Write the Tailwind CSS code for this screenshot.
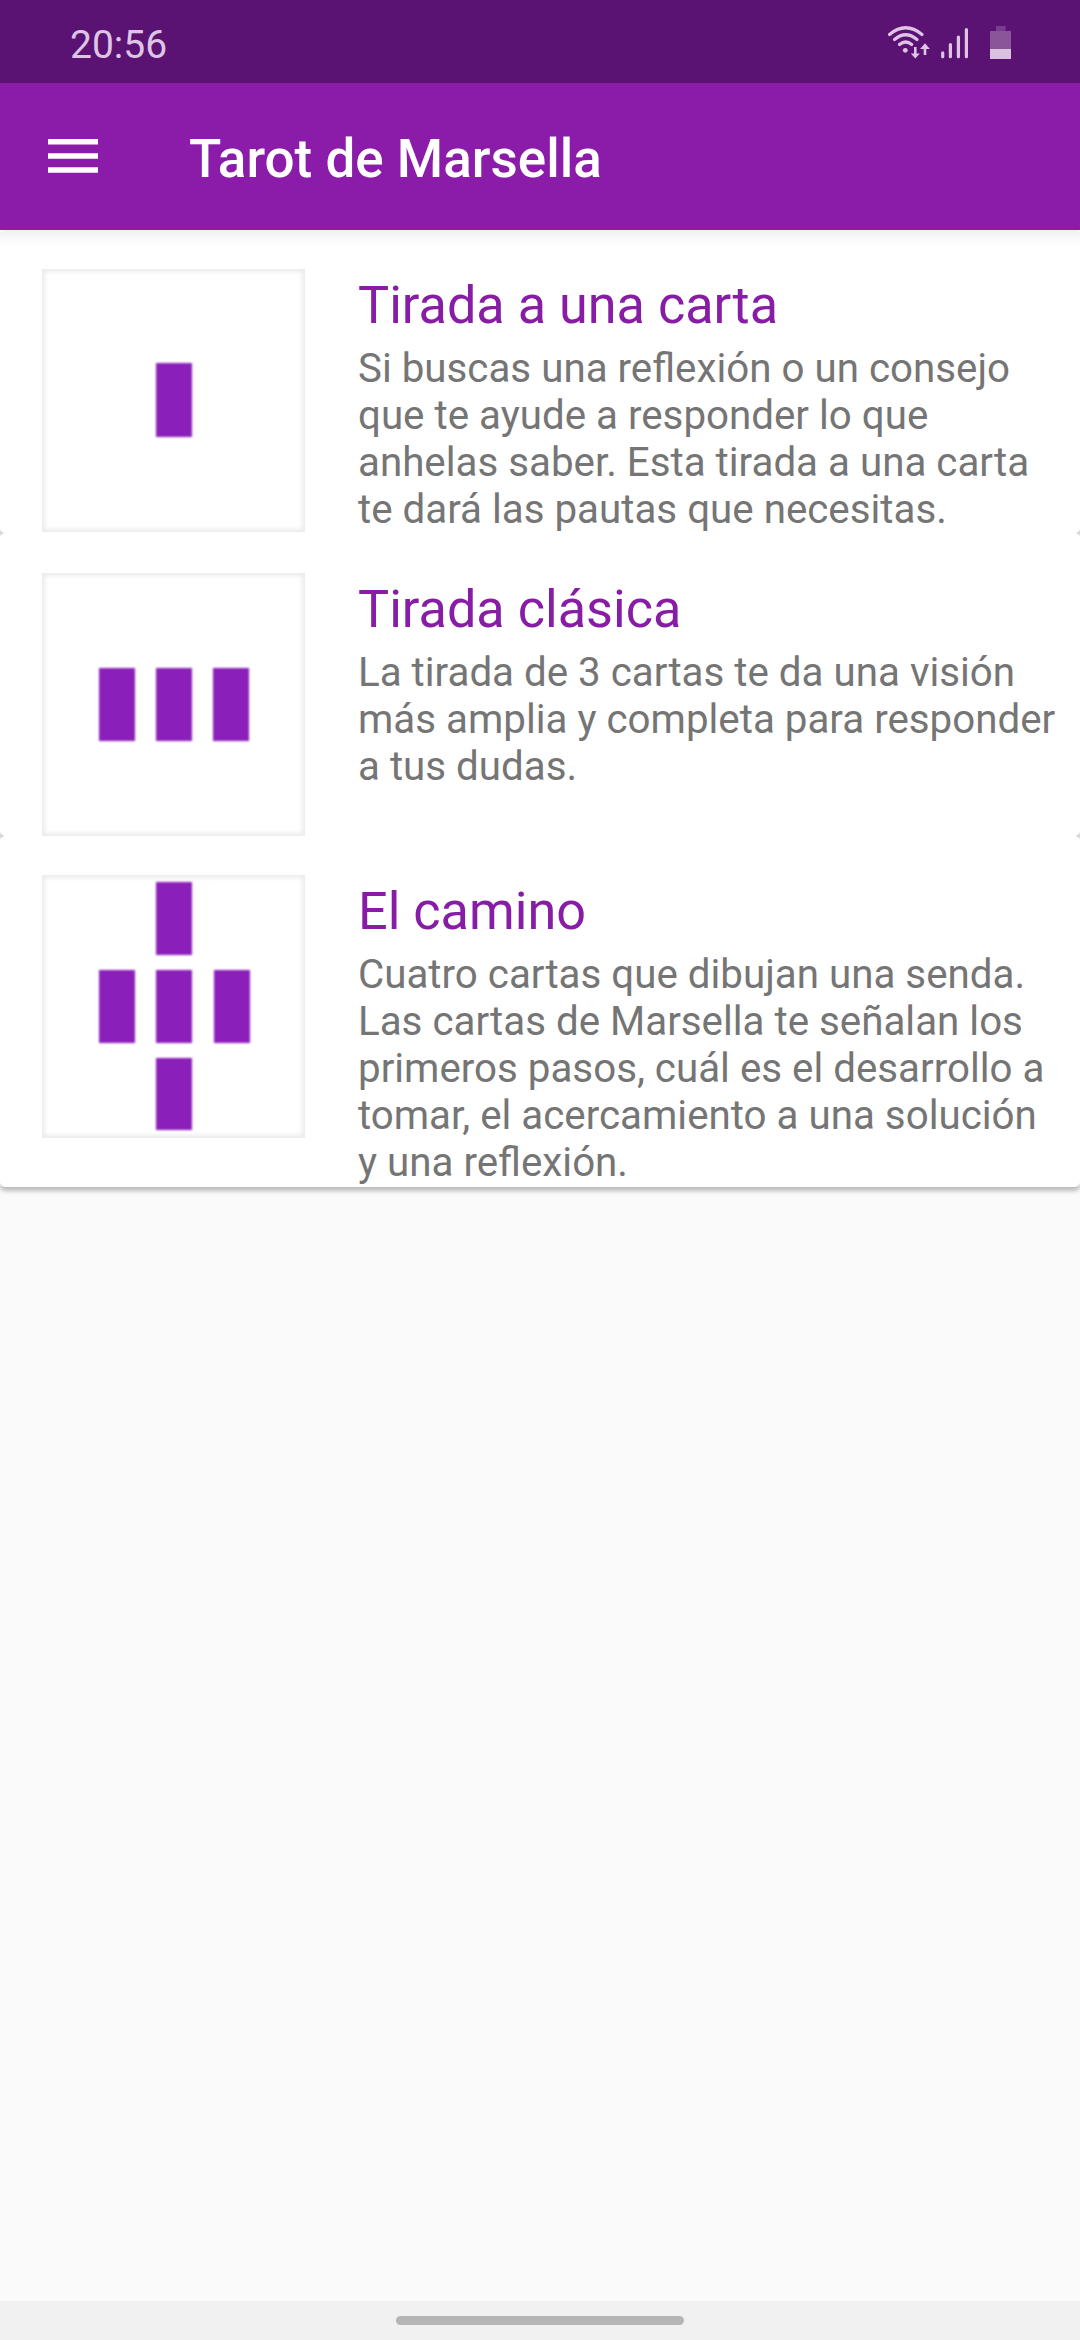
<!DOCTYPE html>
<html lang="es">
<head>
<meta charset="utf-8">
<title>Tarot de Marsella</title>
<script src="https://cdn.jsdelivr.net/npm/@tailwindcss/browser@4"></script>
</head>
<body class="w-[1080px] h-[2340px] overflow-hidden flex flex-col bg-[#fafafa] font-[Roboto,sans-serif]">
  <div class="h-[83px] shrink-0 bg-[#5b1373] flex items-center pl-[70px] pr-[69px] pt-[7px] text-[#dec5e6]">
    <span class="text-[39px] leading-[46px]">20:56</span>
    <svg class="ml-auto -mt-[7px] h-[83px] w-[124px] overflow-visible" viewBox="887 0 124 83" fill="none">
      <g stroke="#dec5e6" stroke-width="3.200" stroke-linecap="round">
        <path d="M889.500 34.500Q905.700 21 922 34.500M894.500 39.500Q905.700 30 917 39.500M899.500 44.500Q905.700 39.500 911.700 44.500"/>
        <path d="M942.700 52.800V56.700M950.400 44.500V56.700M958.400 37V56.700M966.400 29.700V56.700"/>
      </g>
      <circle cx="905.300" cy="50.300" r="2.400" fill="#dec5e6"/>
      <path fill="#dec5e6" d="M914 47h2.600v6.500h3.200l-4.500 5l-4.500-5h3.200zM923.700 55h2.600v-6h3.600l-4.900-5.800l-4.900 5.800h3.600z"/>
      <path fill="#7a3c8e" d="M996 26h9.500v5H996z"/>
      <path fill="#8b5599" d="M990 31h21v18h-21z"/>
      <path fill="#dac1e0" d="M990 49h21v10h-21z"/>
    </svg>
  </div>
  <header class="h-[147px] shrink-0 bg-[#8b1caa] flex items-center pl-12 text-white">
    <svg class="w-[50px] h-[34px] -mt-[2px]" viewBox="0 0 50 34" fill="#fff"><path d="M0 0h50v5.500H0zM0 14.200h50v5.500H0zM0 28.300h50v5.500H0z"/></svg>
    <h1 class="ml-[91px] pt-1 text-[53px] leading-[62px] font-medium">Tarot de Marsella</h1>
  </header>
  <main>
    <article class="h-[303px] flex pt-[39px] pl-[42px] bg-linear-to-b from-[#f0f0f0] to-white to-[16px] rounded-[5px] shadow-[0_4px_4px_rgba(0,0,0,0.25)]">
      <svg class="w-[263px] h-[263px] shrink-0 shadow-[inset_0_0_4px_3px_#ececec]" viewBox="0 0 263 263" fill="#8b1fba"><path class="blur-[1.300px]" d="M114 94h36v74h-36z"/></svg>
      <div class="ml-[53px] pt-1.5">
        <h2 class="text-[52.200px] leading-[62px] text-[#871ca5]">Tirada a una carta</h2>
        <p class="mt-2 text-[40.300px] leading-[47px] text-[#757575] whitespace-nowrap">Si buscas una reflexión o un consejo<br>que te ayude a responder lo que<br>anhelas saber. Esta tirada a una carta<br>te dará las pautas que necesitas.</p>
      </div>
    </article>
    <article class="h-[303px] flex pt-10 pl-[42px] bg-white rounded-[5px] shadow-[0_4px_4px_rgba(0,0,0,0.25)]">
      <svg class="w-[263px] h-[263px] shrink-0 shadow-[inset_0_0_4px_3px_#ececec]" viewBox="0 0 263 263" fill="#8b1fba"><path class="blur-[1.300px]" d="M57 95h36v73h-36zM114 95h36v73h-36zM171 95h36v73h-36z"/></svg>
      <div class="ml-[53px] pt-1.5">
        <h2 class="text-[52.200px] leading-[62px] text-[#871ca5]">Tirada clásica</h2>
        <p class="mt-2 text-[40.300px] leading-[47px] text-[#757575] whitespace-nowrap">La tirada de 3 cartas te da una visión<br>más amplia y completa para responder<br>a tus dudas.</p>
      </div>
    </article>
    <article class="h-[351px] flex pt-[39px] pl-[42px] bg-white rounded-[5px] shadow-[0_4px_4px_rgba(0,0,0,0.25)]">
      <svg class="w-[263px] h-[263px] shrink-0 shadow-[inset_0_0_4px_3px_#ececec]" viewBox="0 0 263 263" fill="#8b1fba"><path class="blur-[1.300px]" d="M114 7h36v73h-36zM57 95h36v73h-36zM114 95h36v73h-36zM172 95h36v73h-36zM114 183h36v72h-36z"/></svg>
      <div class="ml-[53px] pt-1.5">
        <h2 class="text-[52.200px] leading-[62px] text-[#871ca5]">El camino</h2>
        <p class="mt-2 text-[40.300px] leading-[47px] text-[#757575] whitespace-nowrap">Cuatro cartas que dibujan una senda.<br>Las cartas de Marsella te señalan los<br>primeros pasos, cuál es el desarrollo a<br>tomar, el acercamiento a una solución<br>y una reflexión.</p>
      </div>
    </article>
  </main>
  <div class="mt-auto h-[39px] bg-[#f1f1f1] flex justify-center items-center"><div class="w-72 h-[9px] rounded-full bg-[#b5b5b5]"></div></div>
</body>
</html>
